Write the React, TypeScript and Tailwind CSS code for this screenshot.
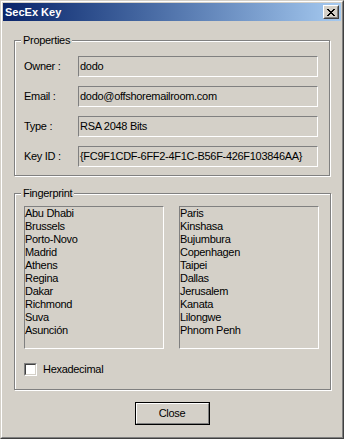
import React from "react";

const leftCities = ["Abu Dhabi", "Brussels", "Porto-Novo", "Madrid", "Athens", "Regina", "Dakar", "Richmond", "Suva", "Asunción"];
const rightCities = ["Paris", "Kinshasa", "Bujumbura", "Copenhagen", "Taipei", "Dallas", "Jerusalem", "Kanata", "Lilongwe", "Phnom Penh"];

const sunken = "border border-t-[#808080] border-l-[#808080] border-b-white border-r-white";
const etched = "border border-[#808080] shadow-[inset_1px_1px_0_#fff,1px_1px_0_#fff]";

function Field({ label, value }: { label: string; value: string }) {
    return (
        <div className="flex items-center h-[21px]">
            <span className="w-[54px] shrink-0">{label}</span>
            <div className={`w-[240px] h-[21px] flex items-center pl-px whitespace-nowrap overflow-hidden ${sunken}`}>
                {value}
            </div>
        </div>
    );
}

function CityList({ items }: { items: string[] }) {
    return (
        <div className={`w-[140px] h-[143px] leading-[13px] ${sunken}`}>
            {items.map((c) => (
                <div key={c} className="h-[13px] whitespace-nowrap">{c}</div>
            ))}
        </div>
    );
}

function CloseGlyph() {
    const cells: [number, number, number][] = [
        [0, 0, 2], [6, 0, 2],
        [1, 1, 2], [5, 1, 2],
        [2, 2, 4],
        [3, 3, 2],
        [2, 4, 4],
        [1, 5, 2], [5, 5, 2],
        [0, 6, 2], [6, 6, 2],
    ];
    return (
        <svg width="8" height="7" viewBox="0 0 8 7" shapeRendering="crispEdges">
            {cells.map(([x, y, w], i) => (
                <rect key={i} x={x} y={y} width={w} height={1} fill="#000" />
            ))}
        </svg>
    );
}

export default function App() {
    return (
        <div className="w-[344px] h-[439px] bg-[#d4d0c8] border border-t-[#d4d0c8] border-l-[#d4d0c8] border-b-[#404040] border-r-[#404040] font-['Liberation_Sans',Arial,sans-serif] text-[11px] tracking-[-0.3px] text-black">
            <div className="h-full border border-t-white border-l-white border-b-[#808080] border-r-[#808080] p-px flex flex-col">
                {/* Title bar */}
                <div className="h-[18px] shrink-0 flex items-center justify-between pl-[2px] pr-[2px] bg-gradient-to-r from-[#0a246a] to-[#a6caf0]">
                    <span className="text-white font-bold tracking-normal">SecEx Key</span>
                    <div className="w-[16px] h-[14px] border border-t-white border-l-white border-b-[#404040] border-r-[#404040] bg-[#d4d0c8]">
                        <div className="h-full border border-t-[#d4d0c8] border-l-[#d4d0c8] border-b-[#808080] border-r-[#808080] flex items-center justify-center">
                            <CloseGlyph />
                        </div>
                    </div>
                </div>

                <div className="flex flex-col pt-[13px]">
                    <fieldset className={`ml-[11px] w-[316px] pb-[8px] pl-[9px] pr-[11px] ${etched}`}>
                        <legend className="-ml-[3px] px-[2px] h-[12px] leading-[12px] bg-[#d4d0c8]">Properties</legend>
                        <div className="pt-[10px] flex flex-col gap-[9px]">
                            <Field label="Owner :" value="dodo" />
                            <Field label="Email :" value="dodo@offshoremailroom.com" />
                            <Field label="Type :" value="RSA 2048 Bits" />
                            <Field label="Key ID :" value="{FC9F1CDF-6FF2-4F1C-B56F-426F103846AA}" />
                        </div>
                    </fieldset>

                    <fieldset className={`ml-[11px] mt-[11px] w-[316px] pb-[13px] pl-[9px] pr-[11px] ${etched}`}>
                        <legend className="-ml-[3px] px-[2px] h-[12px] leading-[12px] bg-[#d4d0c8]">Fingerprint</legend>
                        <div className="pt-[7px] flex flex-col">
                            <div className="flex gap-[15px]">
                                <CityList items={leftCities} />
                                <CityList items={rightCities} />
                            </div>
                            <label className="mt-[14px] h-[13px] flex items-center gap-[6px]">
                                <div className={`w-[13px] h-[13px] flex ${"border border-t-[#808080] border-l-[#808080] border-b-white border-r-white"}`}>
                                    <div className="flex-1 border border-t-[#404040] border-l-[#404040] border-b-[#d4d0c8] border-r-[#d4d0c8] bg-white" />
                                </div>
                                <span>Hexadecimal</span>
                            </label>
                        </div>
                    </fieldset>

                    <div className="mt-[12px] self-center w-[75px] h-[23px] border border-black">
                        <div className="h-full border border-t-white border-l-white border-b-[#808080] border-r-[#808080] flex items-center justify-center">
                            Close
                        </div>
                    </div>
                </div>
            </div>
        </div>
    );
}
